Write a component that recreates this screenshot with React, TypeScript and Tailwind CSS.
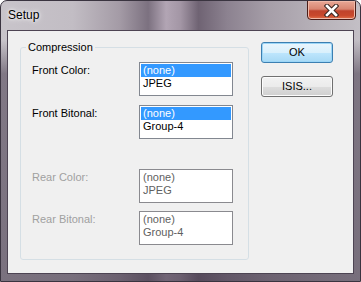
import React from 'react';

const ROWS = [
  { label: 'Front Color:', items: ['(none)', 'JPEG'], enabled: true },
  { label: 'Front Bitonal:', items: ['(none)', 'Group-4'], enabled: true },
  { label: 'Rear Color:', items: ['(none)', 'JPEG'], enabled: false },
  { label: 'Rear Bitonal:', items: ['(none)', 'Group-4'], enabled: false },
];

export default function App() {
  return (
    <div className="w-[361px] h-[282px] bg-white">
      <div className="w-[361px] h-[282px] rounded-t-[7px] border border-[#3a3440] flex flex-col overflow-hidden bg-[linear-gradient(180deg,rgba(0,0,0,0)_0%,rgba(0,0,0,0)_14%,rgba(70,58,76,0.55)_26%,rgba(70,58,76,0.6)_100%),linear-gradient(90deg,#c8c4ca_0%,#c2bdc4_20%,#a49ba6_33%,#7c7180_41%,#b2a5b4_46%,#a396a5_50%,#6f6373_55%,#8c8290_63%,#a79fa9_75%,#b9b4bb_90%,#c3bfc5_100%)]">
        {/* Title bar */}
        <div className="relative h-[29px] shrink-0 flex items-start pl-[7px] pt-[7px]">
          <span className="font-['Liberation_Sans',sans-serif] text-[12px] leading-[15px] text-black [text-shadow:0_0_6px_#ffffff,0_0_3px_#ffffff]">
            Setup
          </span>
          <CloseButton />
        </div>

        {/* Client area */}
        <div className="mx-[6px] mb-[7px] flex-1 border border-[#4d4453] bg-[#f0f0f0] flex items-start font-['Liberation_Sans',sans-serif] text-[11px] leading-[13px] text-black">
          <fieldset className="ml-[12px] mt-[10px] w-[229px] border border-[#d5dfe5] rounded-[3px] pb-[14px]">
            <legend className="ml-[5px] px-[2px] leading-[13px]">Compression</legend>
            <div className="flex flex-col pt-[8px]">
              {ROWS.map((row, i) => (
                <div
                  key={row.label}
                  className={`flex items-start ${i === 1 ? 'mt-[9px]' : ''} ${i === 2 ? 'mt-[30px]' : ''} ${i === 3 ? 'mt-[8px]' : ''}`}
                >
                  <div className={`w-[118px] pl-[11px] pt-[2px] ${row.enabled ? 'text-black' : 'text-[#a0a0a0]'}`}>
                    {row.label}
                  </div>
                  <ListBox items={row.items} enabled={row.enabled} />
                </div>
              ))}
            </div>
          </fieldset>

          <div className="ml-[12px] mt-[11px] flex flex-col gap-[13px]">
            <button className="w-[72px] h-[21px] rounded-[3px] border border-[#3c7fb1] bg-[linear-gradient(180deg,#eaf6fd_0%,#d9f0fc_50%,#bee6fd_51%,#a7d9f5_100%)] shadow-[inset_0_0_0_1px_#9cd6f7] text-[11px] leading-[13px] text-black">
              OK
            </button>
            <button className="w-[72px] h-[21px] rounded-[3px] border border-[#707070] bg-[linear-gradient(180deg,#f2f2f2_0%,#ebebeb_50%,#dddddd_51%,#cfcfcf_100%)] shadow-[inset_0_0_0_1px_#fcfcfc] text-[11px] leading-[13px] text-black">
              ISIS...
            </button>
          </div>
        </div>
      </div>
    </div>
  );
}

function ListBox({ items, enabled }: { items: string[]; enabled: boolean }) {
  return (
    <div className={`w-[94px] h-[34px] border bg-white p-[1px] ${enabled ? 'border-[#828790]' : 'border-[#8a8a8f]'}`}>
      {items.map((item, i) => {
        const selected = enabled && i === 0;
        return (
          <div
            key={item}
            className={`h-[13px] pl-[2px] leading-[13px] ${selected ? 'bg-[#3399ff] text-white' : enabled ? 'text-black' : 'text-[#5f5f5f]'}`}
          >
            {item}
          </div>
        );
      })}
    </div>
  );
}

function CloseButton() {
  return (
    <div className="absolute top-[-1px] right-[4px] w-[49px] h-[20px] rounded-b-[4px] border border-[#4a1d18] bg-[linear-gradient(180deg,#e9a896_0%,#d98571_45%,#c0432c_55%,#c8482c_80%,#e0704a_100%)] shadow-[inset_0_0_0_1px_#f0b9a8] flex items-center justify-center">
      <svg width="15" height="13" viewBox="0 0 15 13">
        <path d="M3 2 L12 11 M12 2 L3 11" stroke="#3a2520" strokeWidth="4.6" strokeLinecap="square" fill="none" />
        <path d="M3 2 L12 11 M12 2 L3 11" stroke="#ffffff" strokeWidth="2.6" strokeLinecap="square" fill="none" />
      </svg>
    </div>
  );
}
